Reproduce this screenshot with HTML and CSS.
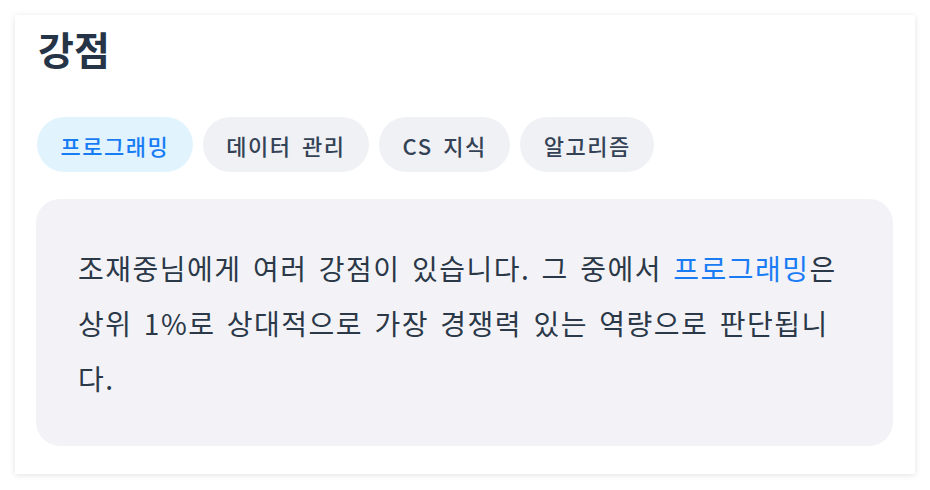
FILE: index.html
```html
<!DOCTYPE html>
<html lang="ko">
<head>
<meta charset="utf-8">
<link rel="stylesheet" href="styles.css">
</head>
<body>
<section class="card">
  <h2 class="title">강점</h2>
  <div class="tabs">
    <span class="tab active">프로그래밍</span>
    <span class="tab">데이터 관리</span>
    <span class="tab">CS 지식</span>
    <span class="tab">알고리즘</span>
  </div>
  <div class="panel">
    <p class="desc">조재중님에게 여러 강점이 있습니다. 그 중에서 <span class="hl">프로그래밍</span>은 상위 1%로 상대적으로 가장 경쟁력 있는 역량으로 판단됩니다.</p>
  </div>
</section>
</body>
</html>
```

FILE: styles.css
```css
html, body {
  margin: 0;
  padding: 0;
  background: #ffffff;
}
body {
  font-family: "Noto Sans CJK KR", "Noto Sans", sans-serif;
  color: #2b3848;
}
.card {
  margin: 15px;
  width: 900px;
  height: 459px;
  box-sizing: border-box;
  background: #fff;
  box-shadow: 0 1px 6px rgba(0, 0, 0, 0.12);
  padding: 8px 22px 28px 21px;
  display: flex;
  flex-direction: column;
}
.title {
  margin: 0;
  font-size: 39px;
  line-height: 50px;
  font-weight: 700;
  color: #253447;
  padding-left: 2px;
}
.tabs {
  display: flex;
  gap: 10px;
  margin-top: 44px;
  padding-left: 1px;
}
.tab {
  display: inline-flex;
  align-items: center;
  height: 55px;
  padding: 0 23.5px;
  border-radius: 28px;
  background: #f0f1f5;
  color: #344256;
  font-size: 22px;
  letter-spacing: 1.5px;
  word-spacing: 3px;
  font-weight: 500;
}
.tab.active {
  background: #e1f4fe;
  color: #1a7cf5;
}
.panel {
  margin-top: 27px;
  background: #f3f3f7;
  border-radius: 24px;
  padding: 42px 42px 39px 42px;
  flex: 1;
}
.desc {
  margin: 0;
  font-size: 28px;
  line-height: 55px;
  letter-spacing: 1.5px;
  word-spacing: 2px;
  max-width: 762px;
  color: #2b3848;
}
.hl {
  color: #1a7cf5;
}
```
